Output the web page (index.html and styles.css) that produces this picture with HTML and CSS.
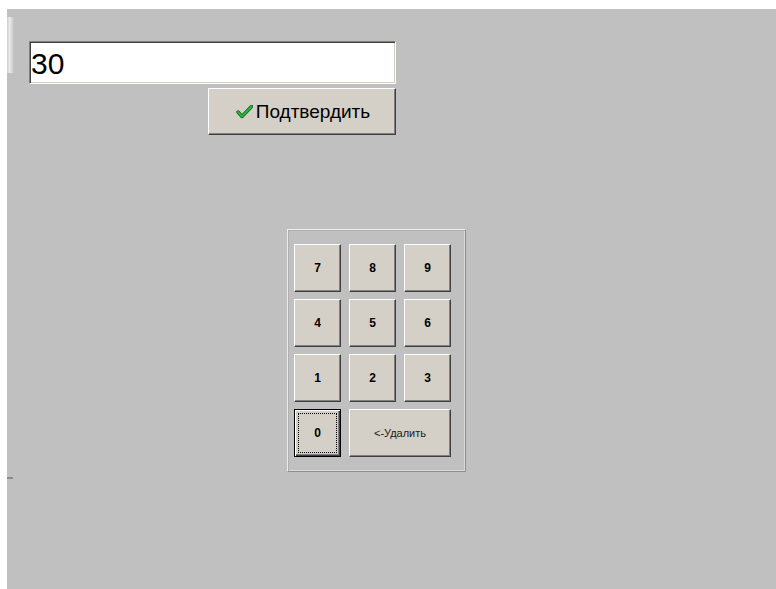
FILE: index.html
```html
<!DOCTYPE html>
<html lang="ru">
<head>
<meta charset="utf-8">
<title>Ввод количества</title>
<link rel="stylesheet" href="styles.css">
</head>
<body>
<div class="screen">
  <span class="glare"></span>
  <span class="tick"></span>
  <div class="entry">
    <div class="field">30</div>
    <button class="confirm" type="button">
      <svg class="check" width="17" height="14" viewBox="0 0 17 14" aria-hidden="true">
        <path d="M2 7 L6 11.5 L15.5 1.5" fill="none" stroke="#0d5e1a" stroke-width="3.4" stroke-linecap="round" stroke-linejoin="round"/>
        <path d="M2 7 L6 11.5 L15.5 1.5" fill="none" stroke="#2fb143" stroke-width="2" stroke-linecap="round" stroke-linejoin="round"/>
      </svg>
      <span>Подтвердить</span>
    </button>
  </div>
  <div class="keypad">
    <button class="key" type="button">7</button>
    <button class="key" type="button">8</button>
    <button class="key" type="button">9</button>
    <button class="key" type="button">4</button>
    <button class="key" type="button">5</button>
    <button class="key" type="button">6</button>
    <button class="key" type="button">1</button>
    <button class="key" type="button">2</button>
    <button class="key" type="button">3</button>
    <button class="key key-focus" type="button">0</button>
    <button class="key key-wide" type="button">&lt;-Удалить</button>
  </div>
</div>
</body>
</html>
```
FILE: styles.css
```css
html, body {
  margin: 0;
  padding: 0;
  background: #ffffff;
}

.screen {
  position: relative;
  margin: 9px 0 0 7px;
  height: 580px;
  box-sizing: border-box;
  padding: 32px 0 0 22px;
  background: #c0c0c0;
  font-family: "Liberation Sans", Arial, sans-serif;
}

/* soft highlight along the left edge of the window */
.glare {
  position: absolute;
  left: 0;
  top: 8px;
  width: 7px;
  height: 56px;
  background: linear-gradient(to right, #d0d0d0, #eeeeee 35%, #dddddd 65%, #c0c0c0);
  opacity: 0.9;
}

.tick {
  position: absolute;
  left: 0;
  top: 468px;
  width: 6px;
  height: 2px;
  background: #8c8c8c;
}

.entry {
  width: 367px;
  display: flex;
  flex-direction: column;
  align-items: flex-end;
}

.field {
  width: 367px;
  height: 43px;
  box-sizing: border-box;
  display: flex;
  align-items: center;
  padding: 2px 0 0 1px;
  background: #ffffff;
  border: 1px solid;
  border-color: #808080 #ffffff #ffffff #808080;
  box-shadow: inset 1px 1px #404040, inset -1px -1px #d4d0c8;
  font-size: 30px;
  color: #000000;
}

.confirm {
  margin-top: 4px;
  width: 188px;
  height: 47px;
  display: flex;
  align-items: center;
  justify-content: center;
  gap: 3px;
  padding: 0 0 0 2px;
  background: #d4d0c8;
  border: 1px solid;
  border-color: #ffffff #404040 #404040 #ffffff;
  box-shadow: inset -1px -1px #808080;
  font-family: "Liberation Sans", Arial, sans-serif;
  font-size: 19px;
  color: #000000;
}

.check {
  display: block;
  margin-top: 1px;
}

.keypad {
  margin: 94px 0 0 258px;
  width: 179px;
  height: 243px;
  box-sizing: border-box;
  padding: 14px 0 0 6px;
  border: 1px solid;
  border-color: #ececec #8e8e8e #8e8e8e #ececec;
  box-shadow: inset 1px 1px #b0b0b0, inset -1px -1px #dadada;
  display: grid;
  grid-template-columns: 47px 47px 47px;
  grid-auto-rows: 48px;
  column-gap: 8px;
  row-gap: 7px;
  align-content: start;
}

.key {
  position: relative;
  padding: 0;
  background: #d4d0c8;
  border: 1px solid;
  border-color: #ffffff #404040 #404040 #ffffff;
  box-shadow: inset -1px -1px #808080;
  font-family: "Liberation Sans", Arial, sans-serif;
  font-size: 12px;
  font-weight: bold;
  color: #000000;
}

.key-wide {
  grid-column: span 2;
  font-size: 11px;
  font-weight: normal;
  color: #1a1a1a;
}

.key-focus {
  border-color: #000000;
  box-shadow: inset 1px 1px #ffffff, inset -1px -1px #404040, inset -2px -2px #808080;
}

.key-focus::after {
  content: "";
  position: absolute;
  inset: 3px;
  border: 1px dotted #000000;
}
```
